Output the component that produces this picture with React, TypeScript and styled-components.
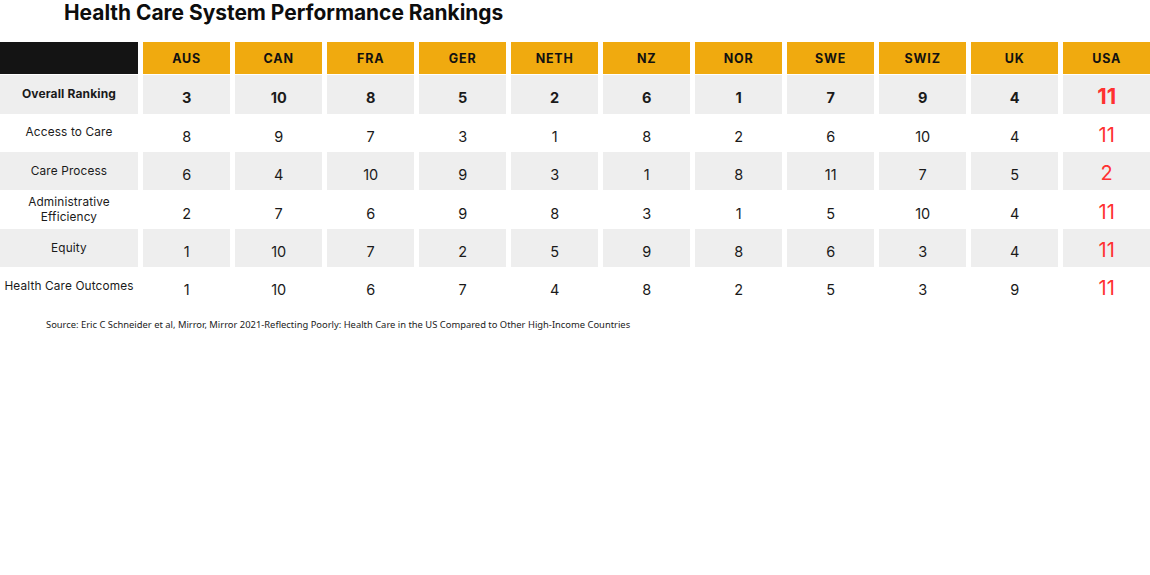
import React from "react";
import styled, { createGlobalStyle } from "styled-components";

const GlobalStyle = createGlobalStyle`
  html, body { margin: 0; padding: 0; background: #ffffff; }
  body { font-family: Inter, "Noto Sans", sans-serif; color: #111111; }
`;

const Page = styled.div`
  width: 1150px;
  height: 575px;
  background: #ffffff;
  display: flex;
  flex-direction: column;
`;

const Title = styled.h1`
  margin: 0 0 16px 0;
  padding-left: 64px;
  font-family: Inter, sans-serif;
  font-size: 20.9px;
  font-weight: 700;
  line-height: 26px;
  color: #0d0d0d;
`;

const Table = styled.div`
  display: flex;
  flex-direction: column;
`;

const Row = styled.div<{ $height: number; $gapAfter?: number }>`
  display: grid;
  grid-template-columns: 138px repeat(11, 1fr);
  column-gap: 5.3px;
  height: ${(p) => p.$height}px;
  margin-bottom: ${(p) => p.$gapAfter ?? 0}px;
`;

const Corner = styled.div`
  background: #141414;
`;

const HeadCell = styled.div`
  background: #f0aa0f;
  display: flex;
  align-items: center;
  justify-content: center;
  font-family: Inter, sans-serif;
  font-weight: 700;
  font-size: 12.5px;
  letter-spacing: 0.8px;
  color: #111111;
`;

const Label = styled.div<{ $shaded: boolean; $bold: boolean }>`
  background: ${(p) => (p.$shaded ? "#eeeeee" : "transparent")};
  display: flex;
  align-items: center;
  justify-content: center;
  text-align: center;
  white-space: nowrap;
  font-family: Inter, sans-serif;
  font-size: ${(p) => (p.$bold ? 12 : 11.8)}px;
  line-height: 15px;
  font-weight: ${(p) => (p.$bold ? 700 : 400)};
  letter-spacing: 0.15px;
  color: #1a1a1a;
  padding-bottom: ${(p) => (p.$bold ? 2 : 0)}px;
`;

const Value = styled.div<{ $shaded: boolean; $bold: boolean }>`
  background: ${(p) => (p.$shaded ? "#eeeeee" : "transparent")};
  display: flex;
  align-items: center;
  justify-content: center;
  padding-top: 7px;
  font-family: Inter, sans-serif;
  font-size: 14.5px;
  font-weight: ${(p) => (p.$bold ? 700 : 400)};
  color: #1a1a1a;
`;

const UsaValue = styled.div<{ $shaded: boolean; $bold: boolean }>`
  background: ${(p) => (p.$shaded ? "#eeeeee" : "transparent")};
  display: flex;
  align-items: center;
  justify-content: center;
  padding-top: ${(p) => (p.$bold ? 3 : 4)}px;
  font-family: Inter, sans-serif;
  font-size: ${(p) => (p.$bold ? 22 : 20)}px;
  font-weight: ${(p) => (p.$bold ? 700 : 400)};
  color: #ff3131;
`;

const Source = styled.p`
  margin: 13px 0 0 46px;
  font-family: "Noto Sans", sans-serif;
  font-size: 9.4px;
  line-height: 12px;
  color: #222222;
`;

const countries = ["AUS", "CAN", "FRA", "GER", "NETH", "NZ", "NOR", "SWE", "SWIZ", "UK", "USA"];

const rows: { label: React.ReactNode; values: number[]; bold?: boolean }[] = [
  { label: "Overall Ranking", values: [3, 10, 8, 5, 2, 6, 1, 7, 9, 4, 11], bold: true },
  { label: "Access to Care", values: [8, 9, 7, 3, 1, 8, 2, 6, 10, 4, 11] },
  { label: "Care Process", values: [6, 4, 10, 9, 3, 1, 8, 11, 7, 5, 2] },
  {
    label: (
      <>
        Administrative
        <br />
        Efficiency
      </>
    ),
    values: [2, 7, 6, 9, 8, 3, 1, 5, 10, 4, 11],
  },
  { label: "Equity", values: [1, 10, 7, 2, 5, 9, 8, 6, 3, 4, 11] },
  { label: "Health Care Outcomes", values: [1, 10, 6, 7, 4, 8, 2, 5, 3, 9, 11] },
];

export default function App() {
  return (
    <Page>
      <GlobalStyle />
      <Title>Health Care System Performance Rankings</Title>
      <Table>
        <Row $height={32} $gapAfter={1.3}>
          <Corner />
          {countries.map((c) => (
            <HeadCell key={c}>{c}</HeadCell>
          ))}
        </Row>
        {rows.map((r, i) => {
          const shaded = i % 2 === 0;
          const bold = !!r.bold;
          return (
            <Row key={i} $height={38.4}>
              <Label $shaded={shaded} $bold={bold}>
                {r.label}
              </Label>
              {r.values.slice(0, 10).map((v, j) => (
                <Value key={j} $shaded={shaded} $bold={bold}>
                  {v}
                </Value>
              ))}
              <UsaValue $shaded={shaded} $bold={bold}>
                {r.values[10]}
              </UsaValue>
            </Row>
          );
        })}
      </Table>
      <Source>
        Source: Eric C Schneider et al, Mirror, Mirror 2021-Reflecting Poorly: Health Care in the US Compared to Other
        High-Income Countries
      </Source>
    </Page>
  );
}
